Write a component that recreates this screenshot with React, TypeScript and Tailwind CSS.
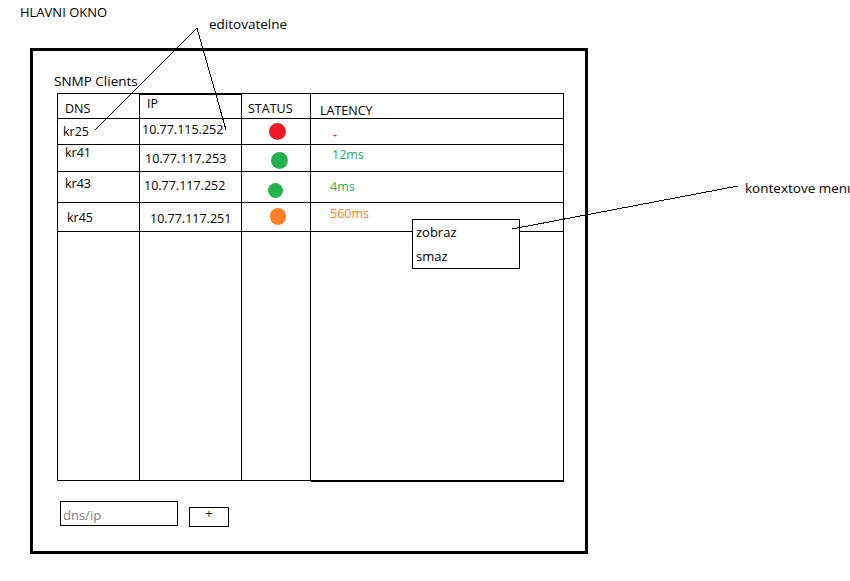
const rows = [
  {
    h: 'h-[26px]',
    dns: 'kr25',
    dnsCls: 'pt-[5px] pl-[5px]',
    ip: '10.77.115.252',
    ipCls: 'pt-[3px] pl-[2px]',
    dotCls: 'w-[17px] h-[17px] mt-[4px] ml-[27px] bg-[#ed1c24]',
    lat: '-',
    latCls: 'pt-[8px] pl-[22px] text-[#ed1c24] font-semibold',
  },
  {
    h: 'h-[27px]',
    dns: 'kr41',
    dnsCls: 'pt-0 pl-[7px]',
    ip: '10.77.117.253',
    ipCls: 'pt-[6px] pl-[5px]',
    dotCls: 'w-[17px] h-[17px] mt-[7px] ml-[29px] bg-[#22b14c]',
    lat: '12ms',
    latCls: 'pt-[2px] pl-[21px] text-[#22b14c]',
  },
  {
    h: 'h-[31px]',
    dns: 'kr43',
    dnsCls: 'pt-[4px] pl-[7px]',
    ip: '10.77.117.252',
    ipCls: 'pt-[6px] pl-[4px]',
    dotCls: 'w-[15px] h-[15px] mt-[11px] ml-[26px] bg-[#22b14c]',
    lat: '4ms',
    latCls: 'pt-[7px] pl-[19px] text-[#22b14c]',
  },
  {
    h: 'h-[29px]',
    dns: 'kr45',
    dnsCls: 'pt-[7px] pl-[9px] shadow-[-1px_0_0_#000]',
    ip: '10.77.117.251',
    ipCls: 'pt-[8px] pl-[10px]',
    dotCls: 'w-[16px] h-[17px] mt-[5px] ml-[28px] bg-[#ff7f27]',
    lat: '560ms',
    latCls: 'pt-[3px] pl-[19px] text-[#ff7f27]',
  },
];

export default function App() {
  return (
    <div className="relative w-[850px] h-[581px] overflow-hidden bg-white text-black font-['Open_Sans',sans-serif] text-[13px] leading-4">
      <div className="pl-[20px] pt-[4px]">HLAVNI OKNO</div>

      {/* hlavni okno */}
      <div className="ml-[30px] mt-[28px] w-[558px] h-[506px] border-[3px] border-black">
        <div className="ml-[21px] mt-[22px] text-[13.5px]">SNMP Clients</div>

        <div className="ml-[24px] mt-[4px] w-[507px] grid grid-cols-[82px_102px_69px_253px] border-l border-t border-black text-[12.5px]">
          <div className="h-[25px] border-r border-b border-black pt-[7px] pl-[7px]">DNS</div>
          <div className="h-[25px] border-r border-b border-black pt-[2px] pl-[7px] shadow-[inset_0_1px_0_#000]">IP</div>
          <div className="h-[25px] border-r border-b border-black pt-[7px] pl-[6px]">STATUS</div>
          <div className="h-[25px] border-r border-b border-black pt-[9px] pl-[9px]">LATENCY</div>

          {rows.map((r) => (
            <div key={r.dns} className="contents">
              <div className={`${r.h} border-r border-b border-black ${r.dnsCls}`}>{r.dns}</div>
              <div className={`${r.h} border-r border-b border-black ${r.ipCls}`}>{r.ip}</div>
              <div className={`${r.h} border-r border-b border-black`}>
                <div className={`rounded-full ${r.dotCls}`} />
              </div>
              <div className={`${r.h} border-r border-b border-black ${r.latCls}`}>{r.lat}</div>
            </div>
          ))}

          <div className="h-[249px] border-r border-b border-black" />
          <div className="h-[249px] border-r border-b border-black" />
          <div className="h-[249px] border-r border-b border-black" />
          <div className="h-[249px] border-r border-b border-black shadow-[0_1px_0_#000]" />
        </div>

        <div className="ml-[27px] mt-[20px] flex items-start gap-[11px]">
          <input
            placeholder="dns/ip"
            className="w-[118px] h-[25px] border border-black pt-[3px] px-[2px] outline-none placeholder:text-[#808080]"
          />
          <button className="mt-[6px] w-[40px] h-[20px] border border-black flex justify-center">
            <span className="leading-[10px]">+</span>
          </button>
        </div>
      </div>

      {/* kontextove menu */}
      <div className="absolute left-[412px] top-[219px] w-[108px] h-[50px] border border-black bg-white pl-[3px] leading-6">
        <div>zobraz</div>
        <div>smaz</div>
      </div>

      <span className="absolute left-[209px] top-[16px] text-[13.5px]">editovatelne</span>
      <span className="absolute left-[745px] top-[180px] text-[13.5px] whitespace-nowrap">kontextove menu</span>

      <svg className="absolute inset-0 pointer-events-none" width="850" height="581" shapeRendering="crispEdges">
        <line x1="197" y1="28" x2="95" y2="130" stroke="#000" strokeWidth="1" />
        <line x1="197" y1="28" x2="226" y2="130" stroke="#000" strokeWidth="1" />
        <line x1="512" y1="229" x2="738" y2="186" stroke="#000" strokeWidth="1" />
      </svg>
    </div>
  );
}
